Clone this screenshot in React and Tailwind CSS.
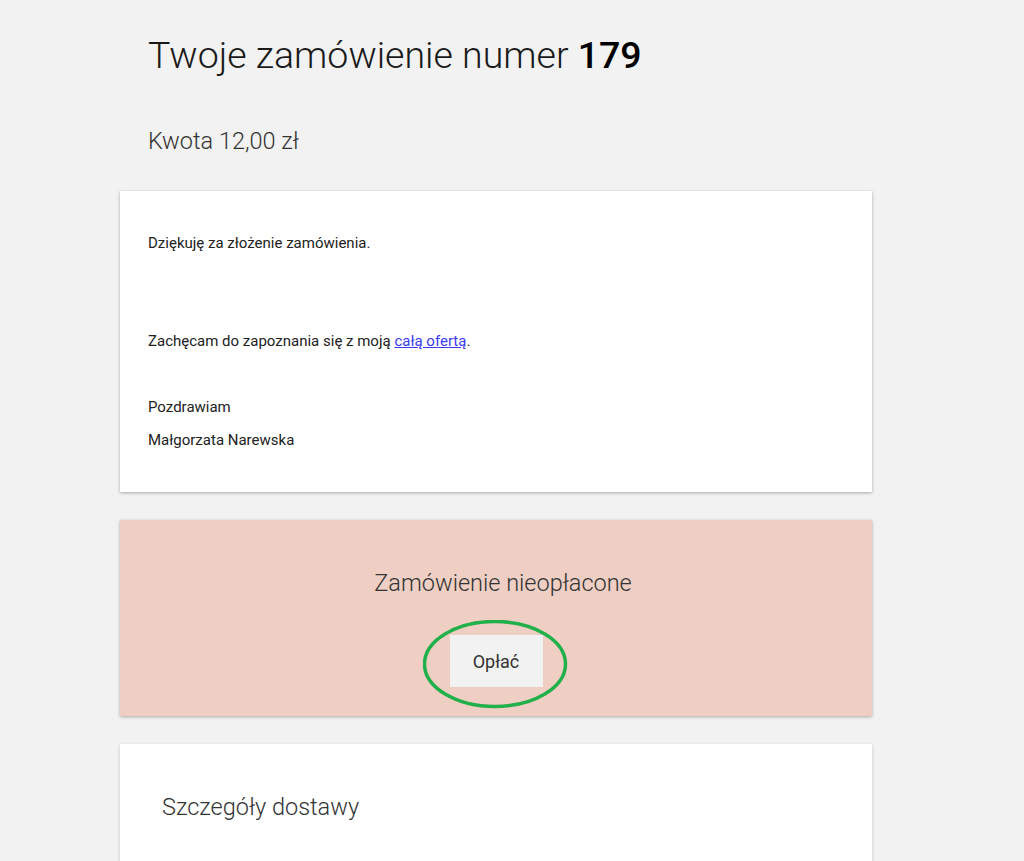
import React from 'react';

const font = { fontFamily: 'Roboto, "Noto Sans", sans-serif' };

const App = () => {
  return (
    <div className="min-h-[861px] bg-[#f2f2f2] text-[#222]" style={font}>
      <div className="ml-[120px] w-[752px]">
        <div className="px-7 pt-[33px]">
          <h1 className="text-[37.5px] leading-[44px] font-light text-[#1a1a1a]">
            Twoje zamówienie numer <span className="font-medium text-black">179</span>
          </h1>
          <h2 className="mt-[50px] text-[23.5px] leading-[28px] font-light text-[#333]">Kwota 12,00 zł</h2>
        </div>

        <div className="mt-[36px] bg-white px-7 pt-[42px] pb-[42px] text-[15px] leading-[20px] text-[#222] shadow-[0_1px_3px_rgba(0,0,0,0.3)]">
          <p>Dziękuję za złożenie zamówienia.</p>
          <p className="mt-[78px]">
            Zachęcam do zapoznania się z moją{' '}
            <a href="#" className="text-[#3b3bf0] underline">całą ofertą</a>.
          </p>
          <p className="mt-[46px]">Pozdrawiam</p>
          <p className="mt-[13px]">Małgorzata Narewska</p>
        </div>

        <div className="mt-[28px] h-[196px] bg-[#efcfc3] flex flex-col items-center shadow-[0_1px_3px_rgba(0,0,0,0.3)]">
          <h3 className="mt-[49px] pl-[14px] text-[23.5px] leading-[28px] font-light text-[#333]">Zamówienie nieopłacone</h3>
          <div className="relative mt-[38px]">
            <button className="w-[93px] h-[52px] bg-[#f2f2f2] text-[18px] text-[#333]">Opłać</button>
            <svg className="absolute left-[-27px] top-[-15px]" width="147" height="90" viewBox="0 0 147 90">
              <ellipse cx="72" cy="44" rx="70.5" ry="42.5" fill="none" stroke="#22b04b" strokeWidth="3.5" />
            </svg>
          </div>
        </div>

        <div className="mt-[28px] h-[140px] bg-white px-[42px] pt-[49px] shadow-[0_1px_3px_rgba(0,0,0,0.2)]">
          <h3 className="text-[23.5px] leading-[28px] font-light text-[#333]">Szczegóły dostawy</h3>
        </div>
      </div>
    </div>
  );
};

export default App;
